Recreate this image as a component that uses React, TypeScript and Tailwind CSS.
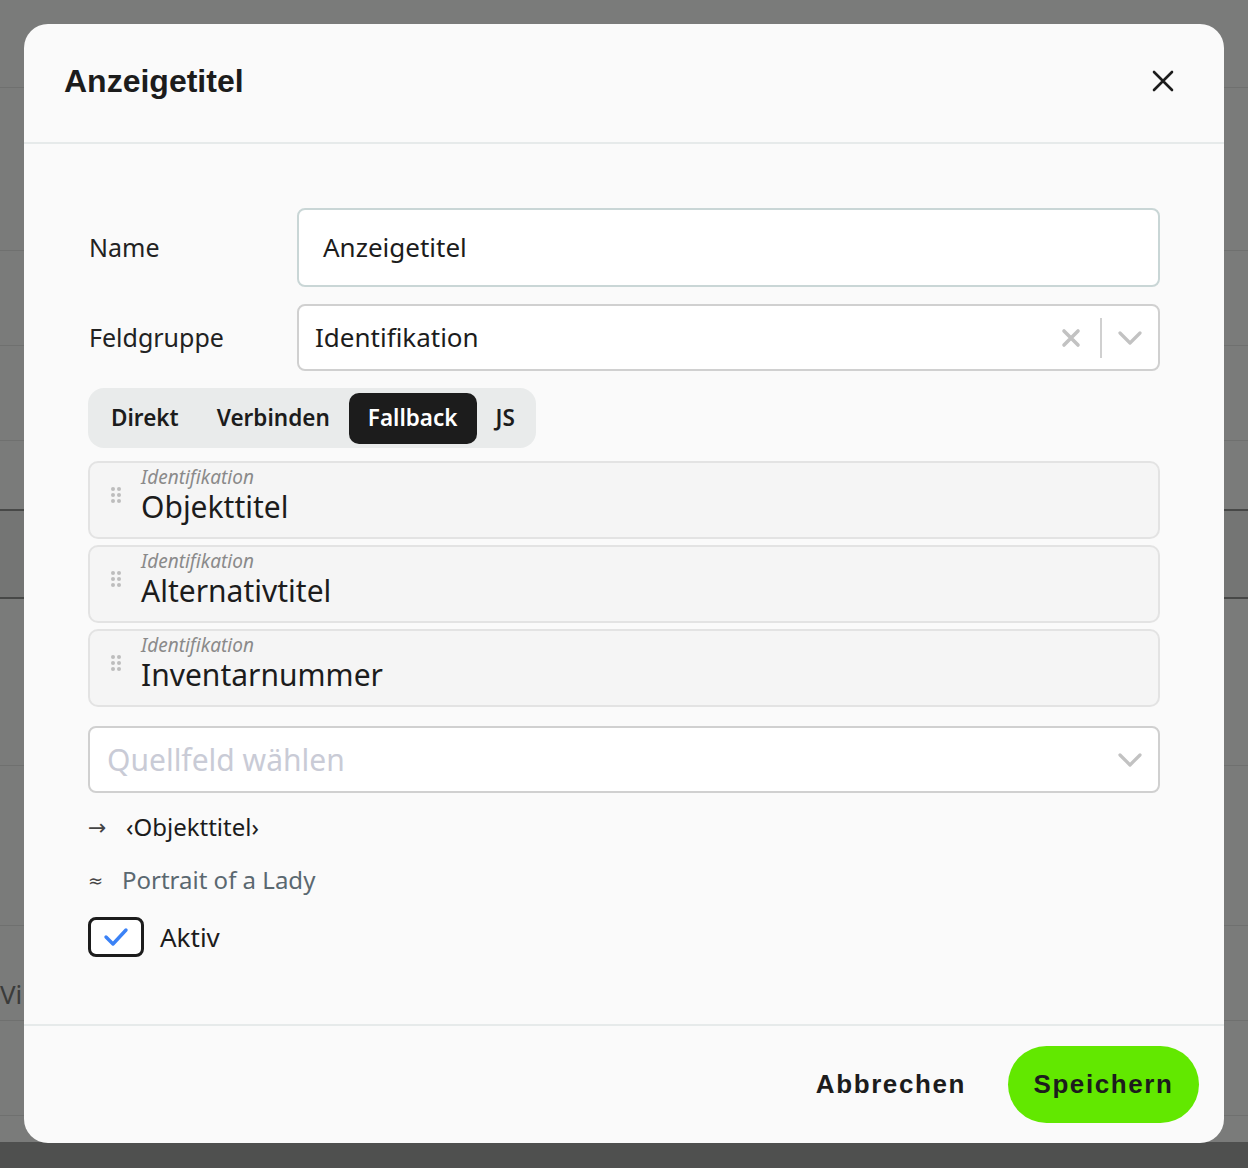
import React, { useState } from 'react';

const SANS = "font-['Noto_Sans',sans-serif]";

const fallbackFields = [
  { group: 'Identifikation', name: 'Objekttitel' },
  { group: 'Identifikation', name: 'Alternativtitel' },
  { group: 'Identifikation', name: 'Inventarnummer' },
];

const tabs = ['Direkt', 'Verbinden', 'Fallback', 'JS'];

// faint rows of the page behind the overlay
const bgLines = [87, 250, 345, 440, 765, 925, 1020, 1115];

const Chevron = () => (
  <svg width="24" height="14" viewBox="0 0 24 14" fill="none">
    <path d="M2 2l10 10L22 2" stroke="#c2c2c2" strokeWidth="3.2" strokeLinecap="round" strokeLinejoin="round" />
  </svg>
);

const DragDots = () => (
  <svg width="12" height="16" viewBox="0 0 12 16" className="mt-[24px] shrink-0">
    {[2, 8, 14].map(y => (
      <React.Fragment key={y}>
        <circle cx="3" cy={y} r="2" fill="#bdbdbd" />
        <circle cx="9" cy={y} r="2" fill="#bdbdbd" />
      </React.Fragment>
    ))}
  </svg>
);

const App: React.FC = () => {
  const [tab, setTab] = useState('Fallback');
  const [active, setActive] = useState(true);

  return (
    <div className={`relative h-[1168px] w-full overflow-hidden bg-[#7a7b7a] ${SANS}`}>
      {/* page behind the overlay */}
      {bgLines.map(y => (
        <div key={y} className="absolute left-0 right-0 h-px bg-[#6f706f]" style={{ top: y }} />
      ))}
      <div className="absolute left-0 right-0 top-[509px] h-[90px] border-y-2 border-[#474847] bg-[#747574]" />
      <div className="absolute left-0 top-[975px] text-[26px] text-[#3a3b3a]">Vi</div>
      <div className="absolute bottom-0 left-0 right-0 h-[26px] bg-[#4f504f]" />

      {/* dialog */}
      <div className="absolute left-[24px] top-[24px] flex h-[1119px] w-[1200px] flex-col rounded-[24px] bg-[#fafafa]">
        <div className="flex h-[120px] shrink-0 items-center justify-between border-b-2 border-[#e6eaea] pb-[4px] pl-10 pr-[45px]">
          <h1 className="font-['Liberation_Sans',sans-serif] text-[32px] font-bold text-[#1c1c1c]">Anzeigetitel</h1>
          <button className="flex h-8 w-8 items-center justify-center">
            <svg width="22" height="22" viewBox="0 0 22 22">
              <path d="M2 2l18 18M20 2L2 20" stroke="#1c1c1c" strokeWidth="2.6" strokeLinecap="round" />
            </svg>
          </button>
        </div>

        <div className="flex flex-1 flex-col px-16 pt-[64px]">
          <div className="flex items-center">
            <label className="w-[209px] shrink-0 pl-px text-[25px] text-[#222]">Name</label>
            <div className="flex h-[79px] flex-1 items-center rounded-[8px] border-2 border-[#c9d6d6] bg-white px-6 text-[26px] text-[#1c1c1c]">
              Anzeigetitel
            </div>
          </div>

          <div className="mt-[17px] flex items-center">
            <label className="w-[209px] shrink-0 pl-px text-[25px] text-[#222]">Feldgruppe</label>
            <div className="flex h-[67px] flex-1 items-center rounded-[8px] border-2 border-[#d0d0d0] bg-white pl-4 pr-4 text-[26px] text-[#1c1c1c]">
              <span className="flex-1">Identifikation</span>
              <svg width="20" height="20" viewBox="0 0 20 20" className="mr-[9px]">
                <path d="M3 3l14 14M17 3L3 17" stroke="#c2c2c2" strokeWidth="3.6" strokeLinecap="round" />
              </svg>
              <div className="mx-[10px] h-[40px] w-[2px] bg-[#d0d0d0]" />
              <span className="ml-[6px]"><Chevron /></span>
            </div>
          </div>

          <div className="mt-[17px] flex h-[60px] w-[448px] items-center rounded-[16px] bg-[#e9ebeb] px-1 text-[22.5px] font-semibold text-[#1c1c1c]">
            {tabs.map(t => (
              <button
                key={t}
                onClick={() => setTab(t)}
                className={`flex h-[51px] items-center rounded-[10px] px-[19px] ${
                  tab === t ? 'bg-[#1c1c1c] text-white' : ''
                }`}
              >
                {t}
              </button>
            ))}
          </div>

          <div className="mt-[13px] flex flex-col gap-[6px]">
            {fallbackFields.map(f => (
              <div
                key={f.name}
                className="flex h-[78px] items-start gap-[19px] rounded-[10px] border-2 border-[#e3e3e3] bg-[#f5f5f5] pl-[20px]"
              >
                <DragDots />
                <div className="flex flex-col pt-[3px]">
                  <span className="text-[19px] leading-[22px] italic text-[#8a8a8a]">{f.group}</span>
                  <span className="mt-[4px] text-[30px] leading-[30px] text-[#1c1c1c]">{f.name}</span>
                </div>
              </div>
            ))}
          </div>

          <div className="mt-[19px] flex h-[67px] items-center rounded-[8px] border-2 border-[#d0d0d0] bg-white pl-[17px] pr-4">
            <span className="flex-1 text-[30px] text-[#c9cbd6]">Quellfeld wählen</span>
            <Chevron />
          </div>

          <div className="mt-[16px] flex items-center text-[24px] text-[#1c1c1c]">
            <span className="w-[38px] font-['DejaVu_Sans',sans-serif] text-[22px] text-[#444]">→</span>
            <span>‹Objekttitel›</span>
          </div>

          <div className="mt-[17px] flex items-center text-[24px] text-[#5a6870]">
            <span className="w-[34px] font-['DejaVu_Sans',sans-serif] text-[18px] text-[#444]">≈</span>
            <span>Portrait of a Lady</span>
          </div>

          <label className="mt-[19px] flex items-center gap-[16px]" onClick={() => setActive(!active)}>
            <span className="flex h-[40px] w-[56px] items-center justify-center rounded-[8px] border-[3px] border-[#1c1c1c] bg-white">
              {active && (
                <svg width="26" height="20" viewBox="0 0 26 20">
                  <path d="M3 10l7 7L23 3" stroke="#3b82f6" strokeWidth="3.4" fill="none" strokeLinecap="round" strokeLinejoin="round" />
                </svg>
              )}
            </span>
            <span className="text-[26px] text-[#1c1c1c]">Aktiv</span>
          </label>
        </div>

        <div className="flex h-[119px] shrink-0 items-center justify-end gap-[42px] border-t-2 border-[#e6eaea] pr-[25px] font-['Liberation_Sans',sans-serif] text-[26px] font-bold tracking-[1.6px] text-[#1c1c1c]">
          <button>Abbrechen</button>
          <button className="flex h-[77px] w-[191px] items-center justify-center rounded-full bg-[#62e800]">
            Speichern
          </button>
        </div>
      </div>
    </div>
  );
};

export default App;
